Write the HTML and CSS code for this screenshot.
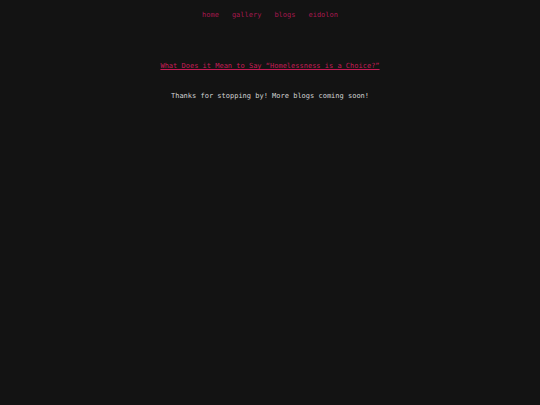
FILE: index.html
```html
<!DOCTYPE html>
<html>
<head>
<meta charset="utf-8">
<link rel="stylesheet" href="styles.css">
</head>
<body>
<nav class="nav">
  <a href="#">home</a>
  <a href="#">gallery</a>
  <a href="#">blogs</a>
  <a href="#">eidolon</a>
</nav>
<main class="main">
  <a class="post" href="#">What Does it Mean to Say “Homelessness is a Choice?”</a>
  <p class="note">Thanks for stopping by! More blogs coming soon!</p>
</main>
</body>
</html>
```
FILE: styles.css
```css
html, body {
  margin: 0;
  padding: 0;
  background: #131313;
  height: 100%;
}
body {
  font-family: "DejaVu Sans Mono", monospace;
  font-size: 7px;
  line-height: 8px;
  color: #d4d4d4;
}
.nav {
  display: flex;
  justify-content: center;
  gap: 13px;
  padding-top: 11px;
}
.nav a {
  color: #a8184f;
  text-decoration: none;
}
.main {
  display: flex;
  flex-direction: column;
  align-items: center;
  padding-top: 43px;
}
.post {
  color: #c41c55;
  text-decoration: underline;
}
.note {
  margin: 22px 0 0;
}
```
